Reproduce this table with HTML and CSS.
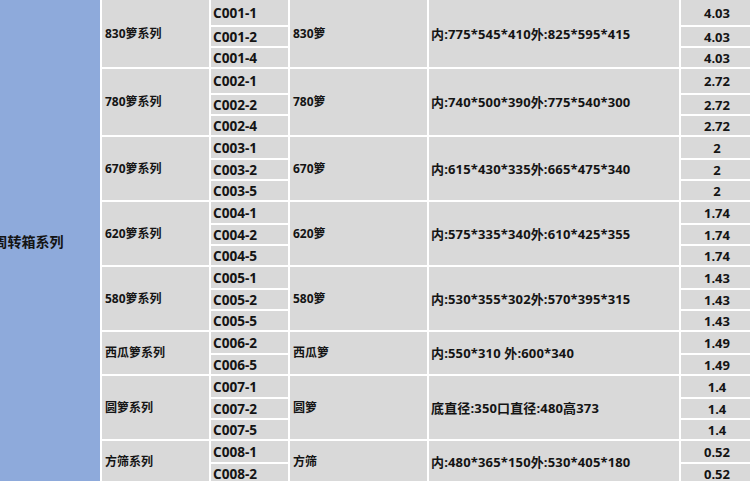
FILE: index.html
```html
<!DOCTYPE html>
<html lang="zh-CN">
<head>
<meta charset="utf-8">
<title>周转箱系列</title>
<link rel="stylesheet" href="styles.css">
</head>
<body>
<table class="sheet">
  <colgroup>
    <col class="c-cat"><col class="c-series"><col class="c-code"><col class="c-name"><col class="c-spec"><col class="c-val">
  </colgroup>
  <tbody>
    <tr class="row top">
      <td class="cat" rowspan="22">周转箱系列</td>
      <td class="series" rowspan="3">830箩系列</td>
      <td class="code">C001-1</td>
      <td class="name" rowspan="3">830箩</td>
      <td class="spec" rowspan="3">内:775*545*410外:825*595*415</td>
      <td class="val">4.03</td>
    </tr>
    <tr class="row"><td class="code">C001-2</td><td class="val">4.03</td></tr>
    <tr class="row"><td class="code">C001-4</td><td class="val">4.03</td></tr>

    <tr class="row tall">
      <td class="series" rowspan="3">780箩系列</td>
      <td class="code">C002-1</td>
      <td class="name" rowspan="3">780箩</td>
      <td class="spec" rowspan="3">内:740*500*390外:775*540*300</td>
      <td class="val">2.72</td>
    </tr>
    <tr class="row"><td class="code">C002-2</td><td class="val">2.72</td></tr>
    <tr class="row"><td class="code">C002-4</td><td class="val">2.72</td></tr>

    <tr class="row first">
      <td class="series" rowspan="3">670箩系列</td>
      <td class="code">C003-1</td>
      <td class="name" rowspan="3">670箩</td>
      <td class="spec" rowspan="3">内:615*430*335外:665*475*340</td>
      <td class="val">2</td>
    </tr>
    <tr class="row"><td class="code">C003-2</td><td class="val">2</td></tr>
    <tr class="row"><td class="code">C003-5</td><td class="val">2</td></tr>

    <tr class="row first">
      <td class="series" rowspan="3">620箩系列</td>
      <td class="code">C004-1</td>
      <td class="name" rowspan="3">620箩</td>
      <td class="spec" rowspan="3">内:575*335*340外:610*425*355</td>
      <td class="val">1.74</td>
    </tr>
    <tr class="row"><td class="code">C004-2</td><td class="val">1.74</td></tr>
    <tr class="row"><td class="code">C004-5</td><td class="val">1.74</td></tr>

    <tr class="row first">
      <td class="series" rowspan="3">580箩系列</td>
      <td class="code">C005-1</td>
      <td class="name" rowspan="3">580箩</td>
      <td class="spec" rowspan="3">内:530*355*302外:570*395*315</td>
      <td class="val">1.43</td>
    </tr>
    <tr class="row"><td class="code">C005-2</td><td class="val">1.43</td></tr>
    <tr class="row"><td class="code">C005-5</td><td class="val">1.43</td></tr>

    <tr class="row first">
      <td class="series" rowspan="2">西瓜箩系列</td>
      <td class="code">C006-2</td>
      <td class="name" rowspan="2">西瓜箩</td>
      <td class="spec" rowspan="2">内:550*310 外:600*340</td>
      <td class="val">1.49</td>
    </tr>
    <tr class="row"><td class="code">C006-5</td><td class="val">1.49</td></tr>

    <tr class="row first">
      <td class="series" rowspan="3">圆箩系列</td>
      <td class="code">C007-1</td>
      <td class="name" rowspan="3">圆箩</td>
      <td class="spec" rowspan="3">底直径:350口直径:480高373</td>
      <td class="val">1.4</td>
    </tr>
    <tr class="row"><td class="code">C007-2</td><td class="val">1.4</td></tr>
    <tr class="row"><td class="code">C007-5</td><td class="val">1.4</td></tr>

    <tr class="row first">
      <td class="series" rowspan="2">方筛系列</td>
      <td class="code">C008-1</td>
      <td class="name" rowspan="2">方筛</td>
      <td class="spec" rowspan="2">内:480*365*150外:530*405*180</td>
      <td class="val">0.52</td>
    </tr>
    <tr class="row"><td class="code">C008-2</td><td class="val">0.52</td></tr>
  </tbody>
</table>
</body>
</html>
```

FILE: styles.css
```css
html, body {
  margin: 0;
  padding: 0;
  overflow: hidden;
  background: #ffffff;
}

.sheet {
  table-layout: fixed;
  width: 800px;
  border-collapse: separate;
  border-spacing: 2px;
  margin: -2px 0 0 -45px;
  background: #ffffff;
  font-family: "Open Sans", "Noto Sans CJK SC", sans-serif;
  font-weight: 700;
  color: #141414;
}

.c-cat { width: 143px; }
.c-series { width: 107px; }
.c-code { width: 77px; }
.c-name { width: 137px; }
.c-spec { width: 250px; }
.c-val { width: 72px; }

.sheet td {
  background: #d9d9d9;
  padding: 0;
  line-height: 16px;
  vertical-align: middle;
  white-space: nowrap;
  overflow: hidden;
}

.row { height: 19px; }
.row.first { height: 21px; }
.row.top { height: 25px; }
.row.tall { height: 24px; }

.sheet td.cat {
  background: #8eaadb;
  text-align: center;
  font-size: 14px;
}

.series {
  font-size: 12px;
  padding-left: 3px !important;
}

.code {
  font-size: 13.6px;
  padding-left: 2px !important;
}

.name {
  font-size: 12px;
  padding-left: 3px !important;
}

.spec {
  font-size: 13px;
  letter-spacing: 0.15px;
  padding-left: 2px !important;
}

.val {
  font-size: 13px;
  text-align: center;
}
```
